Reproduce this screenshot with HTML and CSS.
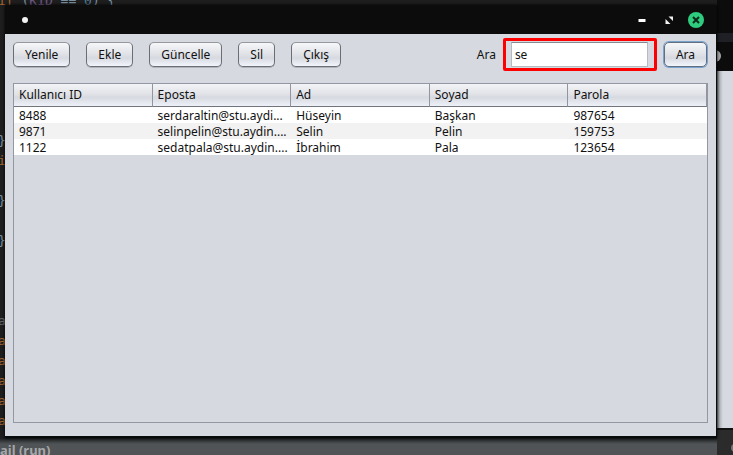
FILE: index.html
```
<!DOCTYPE html>
<html lang="tr">
<head>
<meta charset="utf-8">
<title>Kullanıcılar</title>
<link rel="stylesheet" href="styles.css">
</head>
<body>
<div class="desktop">
  <div class="editor">
<pre class="code"><span class="kw">if</span> (<span class="var">KID</span> == <span class="num">0</span>) {






}
<span class="kw">i</span>

}

}



<span class="dim">a</span>
<span class="kw">a</span>
<span class="kw">a</span>
<span class="kw">a</span>
<span class="kw">a</span>
<span class="kw">a</span></pre>
    <div class="output-title">ail (run)</div>
  </div>
  <div class="behind">
    <div class="behind-top"></div>
    <div class="behind-edge"></div>
    <div class="behind-title"><span class="behind-dot"></span></div>
    <div class="behind-body"></div>
    <div class="behind-foot"><span class="foot-dot"></span></div>
  </div>

  <main class="window">
    <header class="titlebar">
      <span class="title-dot"></span>
      <div class="window-controls">
        <button type="button" class="control" aria-label="Küçült">
          <svg width="16" height="16" viewBox="0 0 16 16"><path d="M4.500 7h7v3h-7z" fill="#fff"/></svg>
        </button>
        <button type="button" class="control" aria-label="Büyüt">
          <svg width="16" height="16" viewBox="0 0 16 16"><path d="M7.500 4.500h4.500v4.500zM4.500 7v5h5z" fill="#f2f2f2"/></svg>
        </button>
        <button type="button" class="control" aria-label="Kapat">
          <svg width="16" height="16" viewBox="0 0 16 16"><circle cx="8" cy="8" r="8" fill="#2ecc7f"/><path d="M5 5l6 6M11 5l-6 6" stroke="#10271b" stroke-width="2"/></svg>
        </button>
      </div>
    </header>
    <div class="content">
      <form class="toolbar">
        <button type="button" class="btn">Yenile</button>
        <button type="button" class="btn">Ekle</button>
        <button type="button" class="btn">Güncelle</button>
        <button type="button" class="btn">Sil</button>
        <button type="button" class="btn">Çıkış</button>
        <div class="search">
          <label for="query">Ara</label>
          <div class="highlight"><input id="query" type="text" value="se"></div>
          <button type="button" class="btn btn-focus">Ara</button>
        </div>
      </form>
      <div class="table-pane">
        <table>
          <thead>
            <tr><th>Kullanıcı ID</th><th>Eposta</th><th>Ad</th><th>Soyad</th><th>Parola</th></tr>
          </thead>
          <tbody>
            <tr><td>8488</td><td>serdaraltin@stu.aydi...</td><td>Hüseyin</td><td>Başkan</td><td>987654</td></tr>
            <tr><td>9871</td><td>selinpelin@stu.aydin....</td><td>Selin</td><td>Pelin</td><td>159753</td></tr>
            <tr><td>1122</td><td>sedatpala@stu.aydin....</td><td>İbrahim</td><td>Pala</td><td>123654</td></tr>
          </tbody>
        </table>
      </div>
    </div>
  </main>
</div>
</body>
</html>
```
FILE: styles.css
```
* { box-sizing: border-box; }

body {
  margin: 0;
  font: 12px/16px "Noto Sans", sans-serif;
  color: #111;
}

.desktop {
  position: relative;
  display: grid;
  grid-template-columns: 1fr 16px;
  height: 100vh;
  overflow: hidden;
  background: #1e1e1e;
}

/* Windows behind the active one */
.editor {
  display: flex;
  flex-direction: column;
  justify-content: space-between;
  min-height: 0;
  overflow: hidden;
}

.code {
  flex: none;
  height: 440px;
  margin: -9px 0 -2px -2px;
  font: 13px/20px "DejaVu Sans Mono", monospace;
  color: #7890a2;
}

.kw { color: #a5652f; }
.var { color: #6f5a84; }
.num { color: #527a94; }
.dim { color: #66696c; }

.output-title {
  flex: none;
  height: 17px;
  padding-top: 4px;
  background: linear-gradient(#1c1d1e, #505457 6px);
  color: #a5a7a8;
  font-size: 13px;
  font-weight: bold;
  white-space: nowrap;
}

.behind {
  display: flex;
  flex-direction: column;
  background: #0c0c0c;
}

.behind-top { height: 33px; }
.behind-edge { height: 9px; background: #1e2025; }
.behind-title { height: 29px; padding-top: 8px; }

.behind-dot {
  display: block;
  width: 12px;
  height: 12px;
  margin-left: -8px;
  border-radius: 50%;
  background: #aaa;
}

.behind-body {
  flex: 1;
  background: linear-gradient(to right, #777a80, #b5b8be 3px, #d6d9e0 6px);
}

.behind-foot {
  height: 27px;
  padding-top: 14px;
  border-top: 2px solid #111;
  background: #2b2b2b;
  overflow: hidden;
}

.foot-dot {
  display: block;
  width: 8px;
  height: 8px;
  margin-left: 14px;
  border-radius: 50%;
  background: #777;
}

/* Active window */
.window {
  position: absolute;
  inset: 5px 16px 17px 5px;
  display: flex;
  flex-direction: column;
  border: solid #080b0c;
  border-width: 0 1px 2px 0;
  background: #d6d9e0;
  box-shadow: 0 0 3px #000;
}

.titlebar {
  display: flex;
  align-items: center;
  justify-content: space-between;
  height: 29px;
  padding: 0 12px 0 17px;
  background: #0c0c0c;
}

.title-dot {
  width: 6px;
  height: 6px;
  border-radius: 50%;
  background: #f2f2f2;
}

.window-controls { display: flex; gap: 11px; }

.control {
  width: 16px;
  height: 16px;
  padding: 0;
  border: 0;
  background: none;
}

.control svg { display: block; }

.content {
  flex: 1;
  display: flex;
  flex-direction: column;
  gap: 12px;
  padding: 4px 8px 13px;
}

.toolbar {
  display: flex;
  align-items: center;
  gap: 16px;
  height: 33px;
}

.btn {
  height: 25px;
  padding: 0 11px;
  border: 1px solid #6b6e75;
  border-top-color: #96989e;
  border-radius: 5px;
  background: linear-gradient(#f6f7f9, #dfe1e6 50%, #d6d9e0 65%, #f2f5fc);
  box-shadow: 0 1px 0 #b0b3ba;
  font: inherit;
  color: #111;
}

.btn-focus {
  border-color: #626f80;
  box-shadow: 0 0 0 1px #79a3cf;
}

.search {
  display: flex;
  align-items: center;
  gap: 7px;
  margin-left: auto;
  padding-right: 1px;
}

.highlight {
  width: 154px;
  padding: 1px 6px 1px 5px;
  border: 3px solid #f00;
  border-radius: 2px;
}

.highlight input {
  display: block;
  width: 100%;
  height: 25px;
  padding: 0 3px;
  border: 1px solid #b7bac1;
  border-top-color: #85888e;
  background: #fff;
  font: inherit;
  color: #111;
}

.table-pane {
  flex: 1;
  border: 1px solid #9297a1;
}

table {
  width: 100%;
  table-layout: fixed;
  border-collapse: separate;
  border-spacing: 0;
  background: #fff;
}

th, td {
  padding: 0 5px;
  text-align: left;
  font-weight: normal;
  white-space: nowrap;
}

th {
  height: 23px;
  border-right: 1px solid #92959d;
  border-bottom: 1px solid #70747d;
  background: linear-gradient(#f3f4f7, #dfe1e6 50%, #d6d9e0 60%, #eef1f8);
}

td {
  height: 16px;
  padding-top: 1px;
  line-height: 15px;
}

tbody tr:nth-child(even) { background: #f2f2f2; }
```
